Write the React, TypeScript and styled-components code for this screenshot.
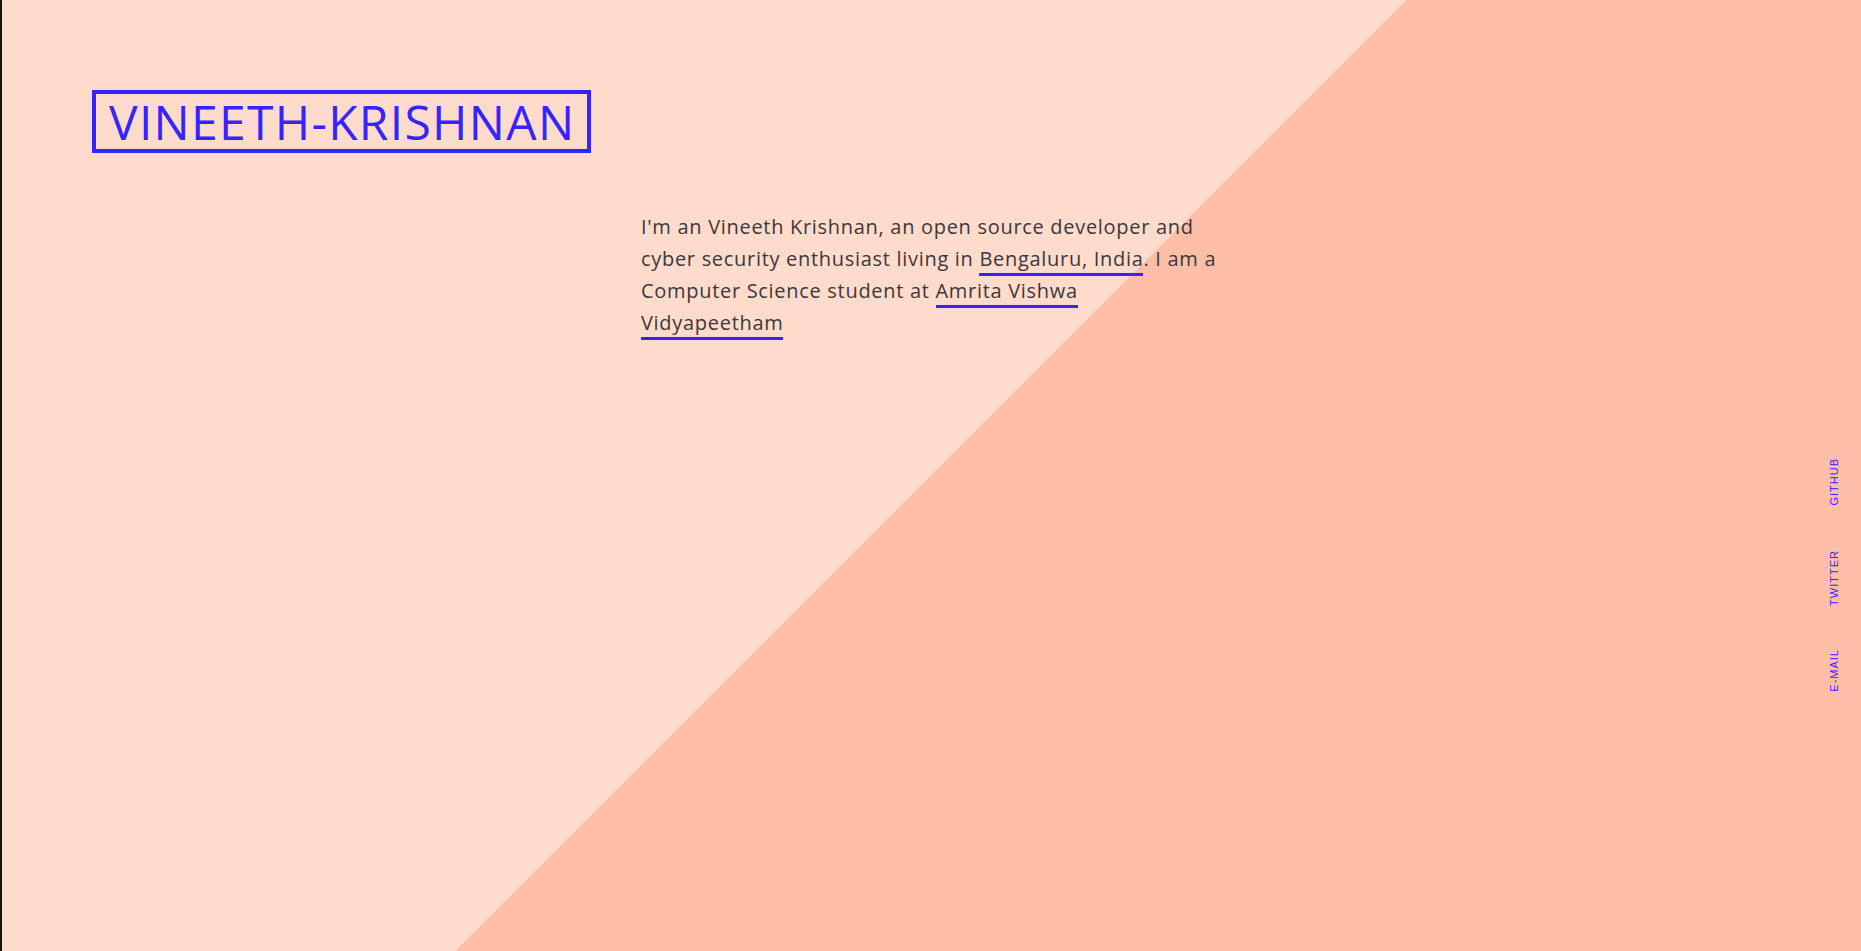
import React from "react";
import styled, { createGlobalStyle } from "styled-components";

const GlobalStyle = createGlobalStyle`
  html, body {
    margin: 0;
    padding: 0;
  }
  body {
    font-family: "Open Sans", "Liberation Sans", sans-serif;
  }
`;

const Page = styled.div`
  display: flex;
  height: 100vh;
  overflow: hidden;
  box-sizing: border-box;
  border-left: 2px solid #111;
  background: linear-gradient(135deg, #ffdbcc 50%, #ffbea8 50%);
`;

const Main = styled.main`
  flex: 1;
  display: flex;
  flex-direction: column;
  padding: 90px 0 0 90px;
`;

const Logo = styled.h1`
  align-self: flex-start;
  margin: 0;
  padding: 0 12px 0 13px;
  height: 63px;
  box-sizing: border-box;
  display: flex;
  align-items: center;
  border: 4px solid #3524ff;
  color: #3524ff;
  font-family: "Open Sans", sans-serif;
  font-size: 48px;
  font-weight: 400;
  letter-spacing: 1.3px;
  line-height: 1;
`;

const Bio = styled.p`
  margin: 58px 0 0 549px;
  width: 579px;
  color: #3b3838;
  font-family: "Open Sans", sans-serif;
  font-size: 20px;
  letter-spacing: 0.7px;
  line-height: 32px;
`;

const Link = styled.a`
  color: inherit;
  text-decoration: none;
  border-bottom: 3px solid #3524ff;
  padding-bottom: 1px;
`;

const Social = styled.nav`
  width: 50px;
  display: flex;
  flex-direction: column;
  align-items: center;
  gap: 44px;
  padding-top: 458px;
  padding-right: 2px;
`;

const SocialLink = styled.a`
  writing-mode: vertical-rl;
  transform: rotate(180deg);
  color: #3a26ff;
  text-decoration: none;
  font-family: "Liberation Sans", sans-serif;
  font-size: 11px;
  letter-spacing: 1px;
`;

const App = () => {
  return (
    <>
      <GlobalStyle />
      <Page>
        <Main>
          <Logo>VINEETH-KRISHNAN</Logo>
          <Bio>
            I'm an Vineeth Krishnan, an open source developer and cyber
            security enthusiast living in <Link href="#">Bengaluru, India</Link>
            . I am a Computer Science student at{" "}
            <Link href="#">Amrita Vishwa Vidyapeetham</Link>
          </Bio>
        </Main>
        <Social>
          <SocialLink href="#">GITHUB</SocialLink>
          <SocialLink href="#">TWITTER</SocialLink>
          <SocialLink href="#">E-MAIL</SocialLink>
        </Social>
      </Page>
    </>
  );
};

export default App;
